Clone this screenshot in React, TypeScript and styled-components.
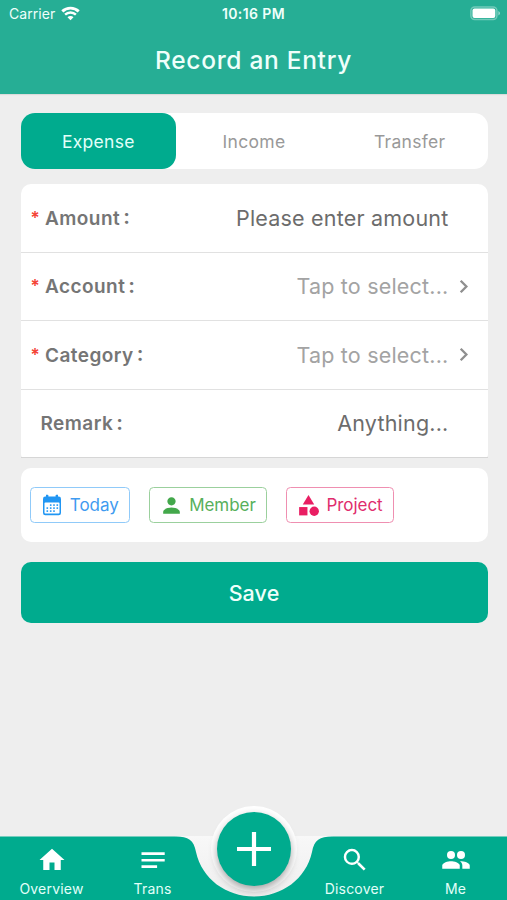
import React from "react";
import styled, { createGlobalStyle } from "styled-components";
import { MdCategory, MdHome, MdPerson, MdSearch } from "react-icons/md";

const Global = createGlobalStyle`
  * { box-sizing: border-box; }
  body { margin: 0; background: #eeeeee; }
`;

const Screen = styled.div`
  width: 507px;
  height: 900px;
  display: flex;
  flex-direction: column;
  overflow: hidden;
  background: #eeeeee;
  font-family: Inter, "Liberation Sans", sans-serif;
  white-space: nowrap;
`;

const Text = styled.span<{ $size: number; $spacing?: number; $weight?: number }>`
  font-size: ${(p) => p.$size}px;
  letter-spacing: ${(p) => p.$spacing ?? 0}px;
  font-weight: ${(p) => p.$weight ?? 400};
`;

const Header = styled.header`
  flex: none;
  height: 94px;
  background: #26ae95;
  color: #effffb;
  box-shadow: 0 1px 1px rgba(0, 0, 0, 0.08);
`;

const StatusBar = styled.div`
  display: grid;
  grid-template-columns: 1fr auto 1fr;
  align-items: center;
  height: 28px;
  padding: 0 6px;
  line-height: 28px;
`;

const StatusStart = styled.div`
  display: flex;
  align-items: center;
  gap: 6px;
  padding-left: 3px;
  svg { margin-top: -2px; }
`;

const StatusEnd = styled.div`
  display: flex;
  justify-content: flex-end;
  margin-top: -2px;
`;

const Title = styled.h1`
  margin: 0;
  height: 66px;
  line-height: 64px;
  text-align: center;
  font-size: 24.5px;
  font-weight: 500;
  letter-spacing: 0.7px;
`;

const Content = styled.main`
  flex: 1;
  padding: 19px 19.5px 0 20.5px;
`;

const Tabs = styled.div`
  display: grid;
  grid-template-columns: repeat(3, 1fr);
  height: 56px;
  border-radius: 14px;
  background: #fff;
`;

const Tab = styled.button<{ $active?: boolean }>`
  border: 0;
  padding: 1px 0 0;
  border-radius: 14px;
  background: ${(p) => (p.$active ? "#00ab8e" : "transparent")};
  color: ${(p) => (p.$active ? "#e2fff9" : "#999")};
  font: 400 17.5px/55px Inter, sans-serif;
  letter-spacing: 0.3px;
`;

const Form = styled.div`
  margin-top: 15px;
  height: 274px;
  display: grid;
  grid-template-rows: repeat(4, 1fr);
  border-radius: 10px 10px 4px 4px;
  background: #fff;
`;

const Row = styled.label`
  display: flex;
  align-items: center;
  padding: 0 17px 0 10px;
  border-bottom: 1.5px solid #e1e1e1;
  &:last-child { border-bottom-color: #d6d6d6; }
`;

const Star = styled.span`
  width: 14.5px;
  color: #f44336;
  font-size: 17px;
  font-weight: 600;
  line-height: 24px;
`;

const Label = styled.span<{ $plain?: boolean }>`
  margin-left: ${(p) => (p.$plain ? "10px" : "0")};
  padding-top: 2px;
  line-height: 24px;
  color: #757575;
  font-size: 19px;
  font-weight: 600;
  letter-spacing: 0.45px;
`;

const Colon = styled.span`
  margin-left: 3px;
  font-size: 21px;
  line-height: 0;
  vertical-align: 0.5px;
`;

const Value = styled.span<{ $muted?: boolean }>`
  margin-left: auto;
  color: ${(p) => (p.$muted ? "#a3a3a3" : "#6c6c6c")};
  font-size: 21.5px;
  letter-spacing: 0.2px;
`;

const Arrow = styled.span`
  width: 22px;
  display: flex;
  justify-content: center;
  padding-left: 8px;
`;

const Chips = styled.div`
  margin-top: 10px;
  height: 74px;
  display: flex;
  align-items: center;
  gap: 19px;
  padding-left: 9.5px;
  border-radius: 10px;
  background: #fff;
`;

const Chip = styled.button<{ $color: string; $line: string; $width: number }>`
  width: ${(p) => p.$width}px;
  height: 36px;
  display: flex;
  align-items: center;
  justify-content: center;
  gap: 5px;
  padding: 0;
  border: 1.3px solid ${(p) => p.$line};
  border-radius: 4.5px;
  background: transparent;
  color: ${(p) => p.$color};
  font: 400 17px/34px Inter, sans-serif;
  letter-spacing: -0.05px;
`;

const Save = styled.button`
  display: block;
  width: 100%;
  height: 61px;
  margin-top: 20px;
  border: 0;
  border-radius: 10px;
  background: #00ab8e;
  color: #effffb;
  font: 500 21.5px/61px Inter, sans-serif;
  letter-spacing: 0.1px;
`;

const Footer = styled.nav`
  position: relative;
  flex: none;
  height: 64px;
`;

const FooterShape = styled.svg`
  position: absolute;
  left: 0;
  bottom: 0;
`;

const NavItems = styled.div`
  position: relative;
  height: 100%;
  display: grid;
  grid-template-columns: repeat(5, 1fr);
  padding: 0 1px;
`;

const NavItem = styled.div`
  display: flex;
  flex-direction: column;
  align-items: center;
  padding-top: 9px;
  color: #fff;
  svg { flex: none; }
  span { line-height: 17px; margin-top: 5px; color: #e2fff9; }
`;

const AddButton = styled.button`
  position: absolute;
  left: 217px;
  top: -24px;
  width: 74px;
  height: 74px;
  padding: 0;
  border: 0;
  border-radius: 50%;
  background: #00ab8e;
  box-shadow: 0 4px 8px rgba(0, 0, 0, 0.36);
  display: flex;
  align-items: center;
  justify-content: center;
`;

const CalendarIcon = () => (
  <svg width="24" height="22" viewBox="-1 0 24 22" fill="#2196f3">
    <path d="M4 .8h1.6a.8.8 0 0 1 .8.8v1h7.200v-1a.8.8 0 0 1 .8-.8H16v1.800h.7A2.300 2.300 0 0 1 19 4.900v14a2.300 2.300 0 0 1-2.300 2.300H3.300A2.300 2.300 0 0 1 1 18.900v-14a2.300 2.300 0 0 1 2.300-2.300H4z" />
    <rect x="2.500" y="8.600" width="15" height="11" rx=".8" fill="#fff" />
    {[10.3, 13.3, 16.3].map((y) =>
      [4.5, 7.9, 11.2, 14.5].map((x) =>
        (y === 10.3 && x === 4.5) || (y === 16.3 && x === 14.5) ? null : (
          <rect key={`${x}-${y}`} x={x} y={y} width="1.600" height="1.600" />
        ),
      ),
    )}
  </svg>
);

const WifiIcon = () => (
  <svg width="19" height="15" viewBox="0 0 19 15" fill="none" stroke="#fff">
    <path d="M1.300 5.400a11.800 11.800 0 0 1 16.400 0" strokeWidth="2.900" />
    <path d="M4.100 8.700a7.800 7.800 0 0 1 10.800 0" strokeWidth="2.500" />
    <path d="M6.500 11.300a4.200 4.200 0 0 1 6 0L9.500 14.300z" fill="#fff" stroke="none" />
  </svg>
);

const BatteryIcon = () => (
  <svg width="31" height="15" viewBox="0 0 31 15">
    <rect x=".9" y=".9" width="26" height="12.600" rx="3.800" fill="none" stroke="#fff" strokeOpacity=".35" strokeWidth="1.500" />
    <rect x="2.500" y="2.500" width="22.800" height="9.400" rx="2" fill="#fff" />
    <path d="M28.400 5v4.400q1.600-.7 1.600-2.200T28.400 5z" fill="#fff" fillOpacity=".5" />
  </svg>
);

const Chevron = () => (
  <svg width="10" height="15" viewBox="0 0 10 15" fill="none" stroke="#8f8f8f" strokeWidth="2.300">
    <path d="M1.700 1.700l5.700 5.800-5.700 5.800" />
  </svg>
);

const LinesIcon = () => (
  <svg width="30" height="30" viewBox="0 0 30 30" fill="#fff">
    <path d="M3.500 7.300h23.200v2.600H3.500zM3.500 13.900h23.200v2.600H3.500zM3.500 20.300h15.600v2.600H3.500z" />
  </svg>
);

const PeopleIcon = () => (
  <svg width="30" height="30" viewBox="0 0 24 24" fill="#fff">
    <circle cx="8" cy="8" r="3.200" />
    <circle cx="16" cy="8" r="3.200" />
    <path d="M8 12.900c-2.330 0-7 1.170-7 3.500V19h14v-2.600c0-2.330-4.670-3.500-7-3.500z" />
    <path d="M15.100 12.950c1.200.84 1.970 1.970 1.970 3.450V19H23v-2.600c0-2.330-4.670-3.500-7.900-3.450z" />
  </svg>
);

const fields = [
  { label: "Amount", value: "Please enter amount", required: true, select: false },
  { label: "Account", value: "Tap to select...", required: true, select: true },
  { label: "Category", value: "Tap to select...", required: true, select: true },
  { label: "Remark", value: "Anything...", required: false, select: false },
];

export default function App() {
  return (
    <Screen>
      <Global />
      <Header>
        <StatusBar>
          <StatusStart>
            <Text $size={14} $spacing={0.05}>Carrier</Text>
            <WifiIcon />
          </StatusStart>
          <Text $size={14} $spacing={0.4} $weight={600}>10:16 PM</Text>
          <StatusEnd><BatteryIcon /></StatusEnd>
        </StatusBar>
        <Title>Record an Entry</Title>
      </Header>

      <Content>
        <Tabs>
          <Tab $active>Expense</Tab>
          <Tab>Income</Tab>
          <Tab>Transfer</Tab>
        </Tabs>
        <Form>
          {fields.map((f) => (
            <Row key={f.label}>
              {f.required && <Star>*</Star>}
              <Label $plain={!f.required}>
                {f.label}
                <Colon>:</Colon>
              </Label>
              <Value $muted={f.select}>{f.value}</Value>
              <Arrow>{f.select && <Chevron />}</Arrow>
            </Row>
          ))}
        </Form>
        <Chips>
          <Chip $color="#3f9bf0" $line="#90caf9" $width={99.5}>
            <CalendarIcon />Today
          </Chip>
          <Chip $color="#57b05b" $line="#9bd09d" $width={118}>
            <MdPerson size={25} color="#43a84b" />Member
          </Chip>
          <Chip $color="#e02d6d" $line="#ef8fb1" $width={108}>
            <MdCategory size={25} color="#e91e63" />Project
          </Chip>
        </Chips>
        <Save>Save</Save>
      </Content>

      <Footer>
        <FooterShape width="507" height="94" viewBox="0 0 507 94">
          <defs>
            <linearGradient id="notch" x1="0" y1="0" x2="0" y2="1">
              <stop offset="0" stopColor="#f8f8f8" />
              <stop offset="1" stopColor="#eeeeee" />
            </linearGradient>
          </defs>
          <rect x="175" y="30" width="158" height="64" fill="url(#notch)" />
          <circle cx="254" cy="43" r="43" fill="#fff" />
          <path
            d="M0 30.500H176C188 30.500 194 34 196 46C202 73 226 90.500 254 90.500S306 73 312 46C314 34 320 30.500 332 30.500H507V94H0z"
            fill="#00ab8e"
          />
        </FooterShape>
        <NavItems>
          <NavItem><MdHome size={30} /><Text $size={14} $spacing={0.2}>Overview</Text></NavItem>
          <NavItem><LinesIcon /><Text $size={14} $spacing={0.2}>Trans</Text></NavItem>
          <div />
          <NavItem><MdSearch size={30} /><Text $size={14} $spacing={0.2}>Discover</Text></NavItem>
          <NavItem><PeopleIcon /><Text $size={14} $spacing={0.2}>Me</Text></NavItem>
        </NavItems>
        <AddButton aria-label="Add entry">
          <svg width="34" height="34" viewBox="0 0 34 34" stroke="#fff" strokeWidth="4.200">
            <path d="M17 0v34M0 17h34" />
          </svg>
        </AddButton>
      </Footer>
    </Screen>
  );
}
